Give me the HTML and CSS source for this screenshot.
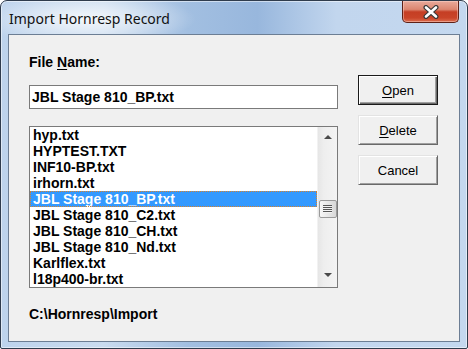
FILE: index.html
```html
<!DOCTYPE html>
<html lang="en">

<head>
    <meta charset="UTF-8" />
    <title>Import Hornresp Record</title>
    <link rel="stylesheet" href="styles.css">
</head>

<body>
    <div class="window">
        <div class="titlebar">
            <span class="title">Import Hornresp Record</span>
            <button class="close" aria-label="Close">
                <svg width="18" height="14" viewBox="0 0 18 14">
                    <path d="M4 2.5 L14 11.5 M14 2.5 L4 11.5" stroke="#3a3a3a" stroke-width="5" stroke-linecap="round" />
                    <path d="M4 2.5 L14 11.5 M14 2.5 L4 11.5" stroke="#ffffff" stroke-width="2.6" stroke-linecap="round" />
                </svg>
            </button>
        </div>
        <div class="client">
            <div class="main">
                <div class="field-label">File <u>N</u>ame:</div>
                <div class="textbox">JBL Stage 810_BP.txt</div>
                <div class="listbox">
                    <ul class="items">
                        <li>hyp.txt</li>
                        <li>HYPTEST.TXT</li>
                        <li>INF10-BP.txt</li>
                        <li>irhorn.txt</li>
                        <li class="selected">JBL Stage 810_BP.txt</li>
                        <li>JBL Stage 810_C2.txt</li>
                        <li>JBL Stage 810_CH.txt</li>
                        <li>JBL Stage 810_Nd.txt</li>
                        <li>Karlflex.txt</li>
                        <li>l18p400-br.txt</li>
                    </ul>
                    <div class="scrollbar">
                        <span class="arrow up"></span>
                        <span class="thumb"><span class="grip"></span></span>
                        <span class="arrow down"></span>
                    </div>
                </div>
                <div class="path">C:\Hornresp\Import</div>
            </div>
            <div class="actions">
                <button class="btn default"><u>O</u>pen</button>
                <button class="btn"><u>D</u>elete</button>
                <button class="btn">Cancel</button>
            </div>
        </div>
    </div>
</body>

</html>
```

FILE: styles.css
```css
* {
    box-sizing: border-box;
}

body {
    margin: 0;
    width: 468px;
    height: 349px;
    overflow: hidden;
    background: #ffffff;
    font-family: "Liberation Sans", Arial, sans-serif;
    color: #000;
}

.window {
    height: 349px;
    display: flex;
    flex-direction: column;
    padding: 0 7px 6px 7px;
    border: 1px solid #2f3c4d;
    border-radius: 7px 7px 2px 2px;
    background:
        radial-gradient(ellipse 110px 26px at 85px 18px, rgba(255, 255, 255, 0.8), rgba(255, 255, 255, 0) 100%),
        linear-gradient(to right, #bdd3ec 0%, #c9dbef 22%, #a2bfe1 40%, #98b7dd 55%, #c2d6ee 72%, #c4d8ef 100%);
    box-shadow: inset 0 0 0 1px rgba(255, 255, 255, 0.5);
}

.titlebar {
    height: 33px;
    display: flex;
    justify-content: space-between;
    align-items: flex-start;
}

.title {
    margin: 8px 0 0 1px;
    font: 14px/20px "Noto Sans", sans-serif;
    color: #111;
}

.close {
    width: 57px;
    height: 22px;
    margin-right: 1px;
    padding: 0;
    display: flex;
    align-items: center;
    justify-content: center;
    border: 1px solid #5e2117;
    border-top: none;
    border-radius: 0 0 5px 5px;
    background: linear-gradient(#e9aa9b 0%, #dc8670 40%, #c53e24 52%, #c94428 80%, #dc6d4f 100%);
    box-shadow: inset 0 0 0 1px rgba(255, 220, 210, 0.45);
}

.client {
    flex: 1;
    display: flex;
    gap: 20px;
    padding: 19px 0 0 20px;
    background: #f0f0f0;
    border: 1px solid #6c7e94;
}

.main {
    width: 309px;
    display: flex;
    flex-direction: column;
}

.field-label,
.textbox,
.items li,
.path {
    font-size: 14px;
    font-weight: bold;
    white-space: nowrap;
}

.field-label {
    line-height: 16px;
}

.textbox {
    margin-top: 15px;
    height: 24px;
    padding: 0 2px;
    line-height: 22px;
    background: #fff;
    border: 1px solid #7a7a7a;
}

.listbox {
    margin-top: 17px;
    height: 162px;
    display: flex;
    background: #fff;
    border: 1px solid #7a7a7a;
}

.items {
    flex: 1;
    list-style: none;
    margin: 0;
    padding: 0;
}

.items li {
    height: 16px;
    line-height: 16px;
    padding-left: 3px;
}

.items li.selected {
    background: #3399ff;
    color: #fff;
    outline: 1px dotted #d9822b;
    outline-offset: -1px;
}

.scrollbar {
    width: 20px;
    display: flex;
    flex-direction: column;
    align-items: center;
    padding: 8px 0 10px 0;
    background: linear-gradient(to right, #e6e6e6 0%, #eeeeee 30%, #f4f4f4 100%);
    border-left: 1px solid #f2f2f2;
}

.arrow {
    width: 0;
    height: 0;
    border-left: 4px solid transparent;
    border-right: 4px solid transparent;
}

.arrow.up {
    border-bottom: 4px solid #4a4a4a;
}

.arrow.down {
    margin-top: auto;
    border-top: 4px solid #4a4a4a;
}

.thumb {
    margin-top: 61px;
    width: 18px;
    height: 18px;
    display: flex;
    align-items: center;
    justify-content: center;
    border: 1px solid #9a9a9a;
    border-radius: 2px;
    background: linear-gradient(to right, #f6f6f6, #e4e4e4 60%, #d8d8d8);
}

.grip {
    width: 9px;
    height: 8px;
    background: repeating-linear-gradient(to bottom, #555 0 1px, #f2f2f2 1px 2px);
}

.path {
    margin-top: 18px;
    line-height: 16px;
}

.actions {
    display: flex;
    flex-direction: column;
    gap: 10px;
    padding-top: 21px;
}

.btn {
    width: 80px;
    height: 30px;
    padding: 0;
    font: 13px "Liberation Sans", Arial, sans-serif;
    color: #000;
    background: #f0f0f0;
    border: 1px solid;
    border-color: #e3e3e3 #696969 #696969 #e3e3e3;
    box-shadow: inset 1px 1px 0 #ffffff, inset -1px -1px 0 #a0a0a0;
}

.btn.default {
    border: 1px solid #1a1a1a;
    box-shadow: inset 1px 1px 0 #ffffff, inset -1px -1px 0 #696969, inset -2px -2px 0 #a0a0a0;
}

.btn u,
.field-label u {
    text-underline-offset: 2px;
}
```
